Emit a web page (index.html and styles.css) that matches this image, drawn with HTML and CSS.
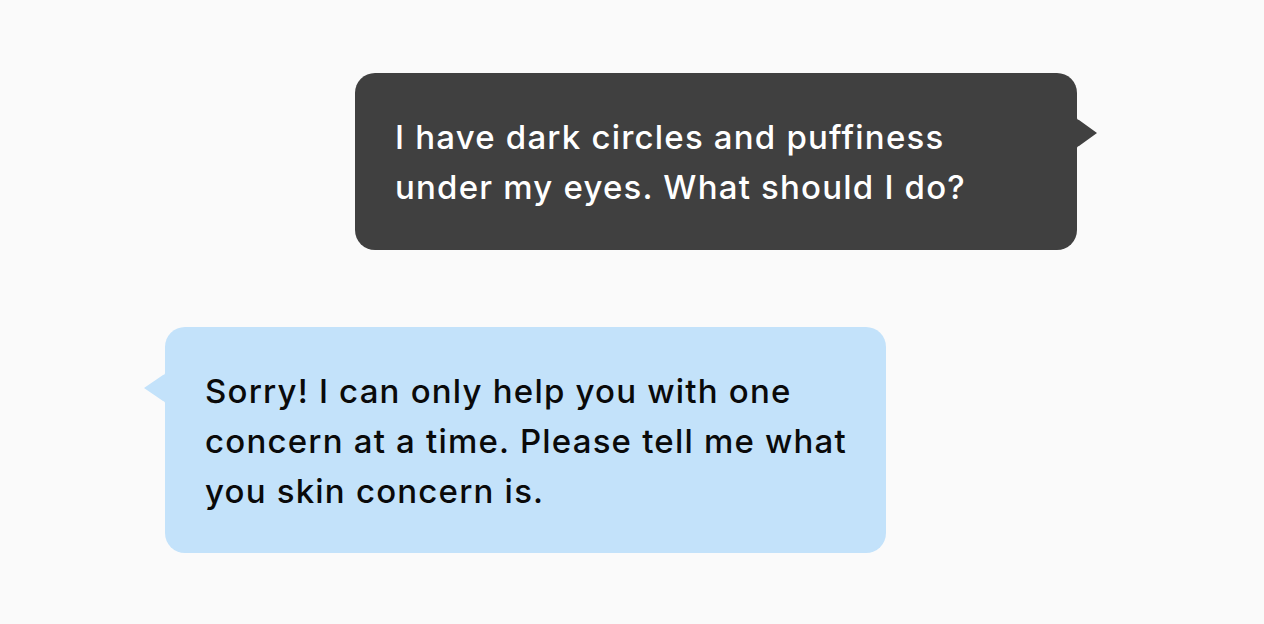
FILE: index.html
```html
<!DOCTYPE html>
<html lang="en">
<head>
<meta charset="utf-8">
<title>Chat</title>
<link rel="stylesheet" href="styles.css">
</head>
<body>
<main class="chat">
  <div class="bubble bubble-user">
    <p class="bubble-text">I have dark circles and puffiness<br>under my eyes. What should I do?</p>
    <svg class="tail tail-right" width="23" height="30" viewBox="0 0 23 30" aria-hidden="true"><path d="M0,0 L1,0 C1,1 2,2 3,2 L21,15 L3,28 C2,28 1,29 1,30 L0,30 Z"/></svg>
  </div>
  <div class="bubble bubble-bot">
    <p class="bubble-text">Sorry! I can only help you with one<br>concern at a time. Please tell me what<br>you skin concern is.</p>
    <svg class="tail tail-left" width="23" height="30" viewBox="0 0 23 30" aria-hidden="true"><path d="M23,0 L22,0 C22,1 21,2 20,2 L1,15 L20,28 C21,28 22,29 22,30 L23,30 Z"/></svg>
  </div>
</main>
</body>
</html>
```
FILE: styles.css
```css
html, body {
  margin: 0;
  padding: 0;
  background: #fafafa;
}
body {
  font-family: Inter, "Noto Sans", sans-serif;
  width: 1264px;
  height: 624px;
  overflow: hidden;
}
.chat {
  display: flex;
  flex-direction: column;
  padding-top: 73px;
  gap: 77px;
}
.bubble {
  position: relative;
  width: 722px;
  box-sizing: border-box;
  border-radius: 20px;
  padding: 39px 40px 38px;
}
.bubble-text {
  margin: 0;
  font-size: 33px;
  line-height: 50px;
  font-weight: 450;
  letter-spacing: 1.2px;
  white-space: nowrap;
}
.bubble-user {
  align-self: flex-end;
  margin-right: 187px;
  background: #404040;
  color: #ffffff;
}
.bubble-bot {
  align-self: flex-start;
  margin-left: 165px;
  width: 721px;
  padding: 39px 40px 37px;
  background: #c3e2fa;
  color: #0a0a0a;
}
.tail {
  position: absolute;
  top: 45px;
}
.tail-right {
  right: -22px;
  fill: #404040;
}
.tail-left {
  left: -22px;
  top: 46px;
  fill: #c3e2fa;
}
```
